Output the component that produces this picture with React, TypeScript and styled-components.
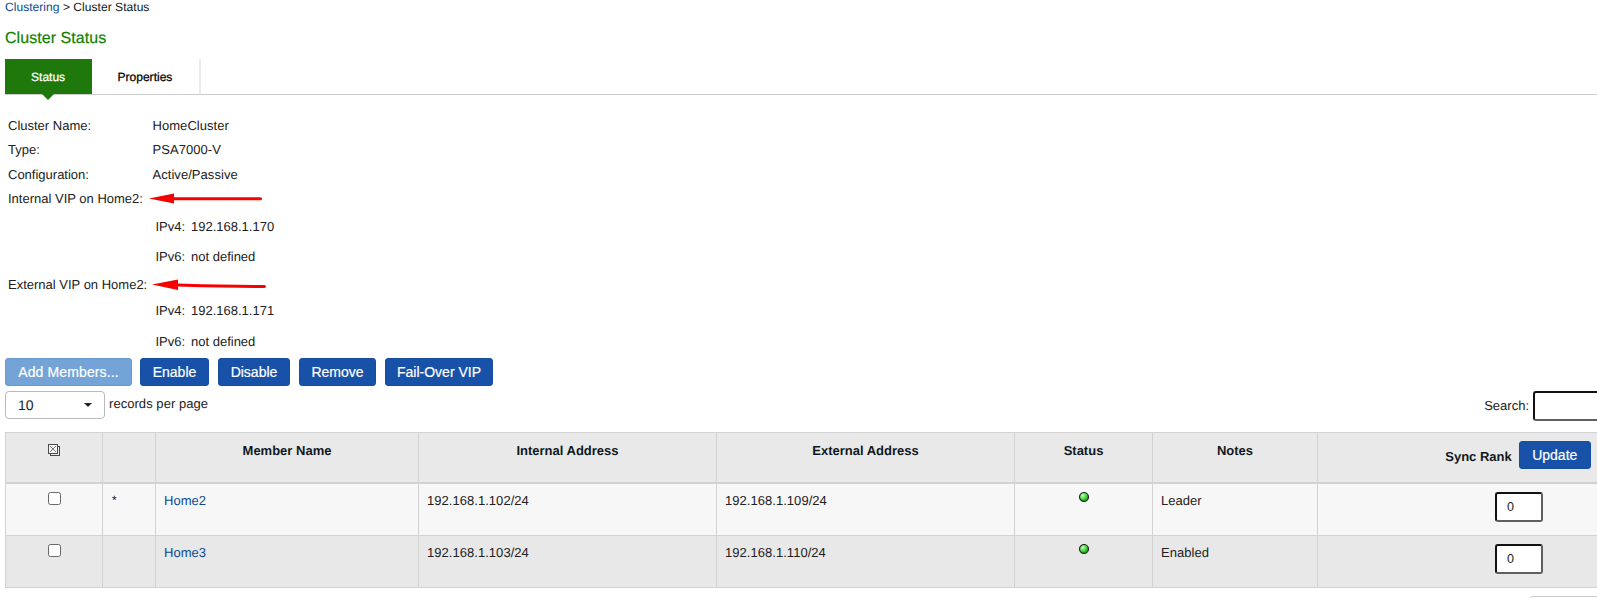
import React from "react";
import styled, { createGlobalStyle } from "styled-components";

const Global = createGlobalStyle`
  * { box-sizing: border-box; }
  html, body { margin: 0; padding: 0; background: #fff; overflow: hidden; }
  body {
    font-family: "Liberation Sans", Arial, sans-serif;
    font-size: 13px;
    line-height: 20px;
    color: #212121;
    text-rendering: geometricPrecision;
  }
  button, input { font-family: inherit; }
`;

const Page = styled.div`
  position: relative;
  width: 100vw;
  height: 598px;
  padding-left: 5px;
  overflow: hidden;
`;

const Link = styled.a`
  color: #0b4a94;
  text-decoration: none;
`;

const Breadcrumb = styled.nav`
  height: 16px;
  font-size: 12px;
  line-height: 14px;
  color: #111820;
  letter-spacing: 0.05px;
  white-space: nowrap;
`;

const Title = styled.h1`
  margin: 13px 0 10px;
  height: 20px;
  font-size: 16px;
  line-height: 20px;
  font-weight: 400;
  letter-spacing: 0.06px;
  color: #138000;
  -webkit-text-stroke: 0.2px currentColor;
`;

const Tabs = styled.div`
  display: flex;
  height: 36px;
  border-bottom: 1px solid #ccc;
`;

const Tab = styled.div<{ $active?: boolean }>`
  position: relative;
  height: 35px;
  width: ${(p) => (p.$active ? 87 : 109)}px;
  padding-left: ${(p) => (p.$active ? 26 : 25.5)}px;
  font-size: 12px;
  line-height: 37px;
  letter-spacing: 0.02px;
  -webkit-text-stroke: 0.25px currentColor;
  color: ${(p) => (p.$active ? "#fff" : "#000")};
  background: ${(p) => (p.$active ? "#1f780b" : "transparent")};
  border-right: ${(p) => (p.$active ? "0" : "2px solid #ebebeb")};
  ${(p) =>
    p.$active &&
    `&::after {
      content: "";
      position: absolute;
      left: 37px;
      top: 35px;
      border: 6px solid transparent;
      border-top-color: #1f780b;
      border-bottom: 0;
    }`}
`;

const Details = styled.dl`
  display: grid;
  grid-template-columns: 144.5px 1fr;
  grid-template-rows: 24px 25px 24px 28px 30px 28px 26px 31px 23px;
  margin: 21px 0 0;
  padding-left: 3px;
`;

const Term = styled.dt`
  white-space: nowrap;
`;

const Value = styled.dd`
  margin: 0;
  letter-spacing: 0.05px;
`;

const Address = styled.dd`
  grid-column: 2;
  display: flex;
  margin: 0 0 0 3px;
`;

const Family = styled.span`
  width: 35.5px;
`;

const Arrow = styled.svg<{ $x: number; $y: number }>`
  position: absolute;
  left: ${(p) => p.$x}px;
  top: ${(p) => p.$y}px;
`;

const Actions = styled.div`
  display: flex;
  gap: 9px;
  margin-top: 3px;
`;

const Button = styled.button<{ $w: number; $muted?: boolean }>`
  width: ${(p) => p.$w}px;
  height: 28px;
  margin: 0 ${(p) => (p.$muted ? -1 : 0)}px 0 0;
  padding: 0;
  border: 1px solid ${(p) => (p.$muted ? "#689bcd" : "#174e9f")};
  border-radius: 3px;
  background: ${(p) => (p.$muted ? "#74a4d7" : "#1852a8")};
  color: #fff;
  font-size: 14px;
  line-height: 26px;
  letter-spacing: ${(p) => (p.$muted ? 0.12 : 0)}px;
  -webkit-text-stroke: 0.2px currentColor;
  white-space: nowrap;
`;

const Controls = styled.div`
  display: flex;
  align-items: flex-start;
  width: 1728px;
  height: 41px;
  margin-top: 5px;
`;

const Select = styled.div`
  display: flex;
  align-items: center;
  justify-content: space-between;
  width: 100px;
  height: 28px;
  padding: 0 12px;
  border: 1px solid #b9b9b9;
  border-radius: 4px;
  font-size: 14px;
`;

const Caret = styled.span`
  border: 4px solid transparent;
  border-top-color: #222;
  border-bottom: 0;
  margin-top: -1px;
`;

const PerPage = styled.span`
  margin: 3px auto 0 4px;
  letter-spacing: 0.05px;
`;

const SearchLabel = styled.label`
  display: flex;
  line-height: 30px;
  gap: 4px;
`;

const Field = styled.input<{ $w: number }>`
  display: block;
  width: ${(p) => p.$w}px;
  height: 30px;
  margin: 0 auto;
  padding: 0 0 0 10px;
  border: 2px solid;
  border-color: #111 #5f5f5f #5f5f5f #111;
  border-radius: 3px;
  background: #fff;
  color: #212121;
  font-size: 12.5px;
  outline: 0;
`;

const Table = styled.table`
  width: 1716px;
  table-layout: fixed;
  border-collapse: separate;
  border-spacing: 0;
  border: solid #d2d2d2;
  border-width: 1px 0 0 1px;
`;

const Head = styled.th`
  height: 51px;
  padding: 8px 0 0;
  vertical-align: top;
  border: solid #d2d2d2;
  border-width: 0 1px 2px 0;
  background: #e9e9e9;
  color: #111820;
  font-size: 13px;
  font-weight: 700;
  line-height: 20px;
`;

const Row = styled.tr<{ $even?: boolean }>`
  background: ${(p) => (p.$even ? "#e8e8e8" : "#f7f7f7")};
`;

const Cell = styled.td<{ $center?: boolean }>`
  height: 52px;
  padding: ${(p) => (p.$center ? "8px 0 0" : "7px 8px 0")};
  text-align: ${(p) => (p.$center ? "center" : "left")};
  vertical-align: top;
  border: solid #d2d2d2;
  border-width: 0 1px 1px 0;
  letter-spacing: 0.04px;
`;

const Checkbox = styled.input.attrs({ type: "checkbox" })`
  appearance: none;
  display: block;
  width: 13px;
  height: 13px;
  margin: 0 auto;
  border: 1px solid #686868;
  border-radius: 2.5px;
  background: #fff;
`;

const Mark = styled.div`
  padding-left: 1px;
  font-size: 12px;
  line-height: 18px;
`;

const Drawing = styled.svg`
  display: block;
  margin: 0 auto;
`;

const SelectAll = styled.div`
  padding-top: 3px;
`;

const RankHead = styled.div`
  display: flex;
  justify-content: center;
  gap: 7px;
  padding-right: 2px;
  line-height: 32px;
`;

const Pager = styled.div`
  width: 200px;
  height: 30px;
  margin: 8px 0 0 1524px;
  border: 1px solid #ccc;
  border-radius: 4px;
`;

const SelectAllIcon = () => (
  <Drawing width="12" height="12" viewBox="0 0 12 12" fill="none" shapeRendering="crispEdges">
    <path d="M10 2.5h1.5v9h-9v-1.5" stroke="#4a4a4a" />
    <rect x="0.5" y="0.5" width="9" height="9" fill="#f5f5f5" stroke="#4a4a4a" />
    <path d="M2 2l6 6M8 2l-6 6" stroke="#777" shapeRendering="auto" />
  </Drawing>
);

const StatusLight = () => (
  <Drawing width="10" height="10" viewBox="0 0 10 10">
    <defs>
      <radialGradient id="light" cx="0.36" cy="0.34" r="0.66">
        <stop offset="0" stopColor="#d0ffc8" />
        <stop offset="0.45" stopColor="#60e454" />
        <stop offset="1" stopColor="#109a0a" />
      </radialGradient>
    </defs>
    <circle cx="5" cy="5" r="4.5" fill="url(#light)" stroke="#1e2b1e" strokeWidth="1.1" />
  </Drawing>
);

const COLUMNS = [97, 53, 263, 298, 298, 138, 165, 403];

const MEMBERS = [
  { mark: "*", name: "Home2", internal: "192.168.1.102/24", external: "192.168.1.109/24", notes: "Leader" },
  { mark: "", name: "Home3", internal: "192.168.1.103/24", external: "192.168.1.110/24", notes: "Enabled" },
];

export default function App() {
  return (
    <Page>
      <Global />
      <Breadcrumb>
        <Link>Clustering</Link> &gt; Cluster Status
      </Breadcrumb>
      <Title>Cluster Status</Title>
      <Tabs>
        <Tab $active>Status</Tab>
        <Tab>Properties</Tab>
      </Tabs>
      <Details>
        <Term>Cluster Name:</Term>
        <Value>HomeCluster</Value>
        <Term>Type:</Term>
        <Value>PSA7000-V</Value>
        <Term>Configuration:</Term>
        <Value>Active/Passive</Value>
        <Term>Internal VIP on Home2:</Term>
        <Value />
        <Address><Family>IPv4:</Family>192.168.1.170</Address>
        <Address><Family>IPv6:</Family>not defined</Address>
        <Term>External VIP on Home2:</Term>
        <Value />
        <Address><Family>IPv4:</Family>192.168.1.171</Address>
        <Address><Family>IPv6:</Family>not defined</Address>
      </Details>
      <Actions>
        <Button $w={127} $muted>Add Members...</Button>
        <Button $w={69}>Enable</Button>
        <Button $w={72}>Disable</Button>
        <Button $w={77}>Remove</Button>
        <Button $w={108}>Fail-Over VIP</Button>
      </Actions>
      <Controls>
        <Select>10<Caret /></Select>
        <PerPage>records per page</PerPage>
        <SearchLabel>Search:<Field $w={200} /></SearchLabel>
      </Controls>
      <Table>
        <colgroup>
          {COLUMNS.map((w, i) => <col key={i} width={w} />)}
        </colgroup>
        <thead>
          <tr>
            <Head><SelectAll><SelectAllIcon /></SelectAll></Head>
            <Head />
            <Head>Member Name</Head>
            <Head>Internal Address</Head>
            <Head>External Address</Head>
            <Head>Status</Head>
            <Head>Notes</Head>
            <Head><RankHead>Sync Rank<Button $w={72}>Update</Button></RankHead></Head>
          </tr>
        </thead>
        <tbody>
          {MEMBERS.map((m, i) => (
            <Row key={m.name} $even={i % 2 === 1}>
              <Cell $center><Checkbox /></Cell>
              <Cell><Mark>{m.mark}</Mark></Cell>
              <Cell><Link>{m.name}</Link></Cell>
              <Cell>{m.internal}</Cell>
              <Cell>{m.external}</Cell>
              <Cell $center><StatusLight /></Cell>
              <Cell>{m.notes}</Cell>
              <Cell $center><Field $w={48} defaultValue="0" /></Cell>
            </Row>
          ))}
        </tbody>
      </Table>
      <Pager />
      <Arrow $x={149} $y={192} width="114" height="14" viewBox="0 0 114 14">
        <path d="M0 6.5L25 1.5V11.5Z" fill="#f70000" />
        <path d="M24 6.7H111.5" stroke="#f70000" strokeWidth="3" strokeLinecap="round" />
      </Arrow>
      <Arrow $x={152} $y={278} width="115" height="14" viewBox="0 0 115 14">
        <path d="M0 6.5L26 1.5V12Z" fill="#f70000" />
        <path d="M25 7L50 7.8L112.5 8.6" fill="none" stroke="#f70000" strokeWidth="3" strokeLinecap="round" />
      </Arrow>
    </Page>
  );
}
